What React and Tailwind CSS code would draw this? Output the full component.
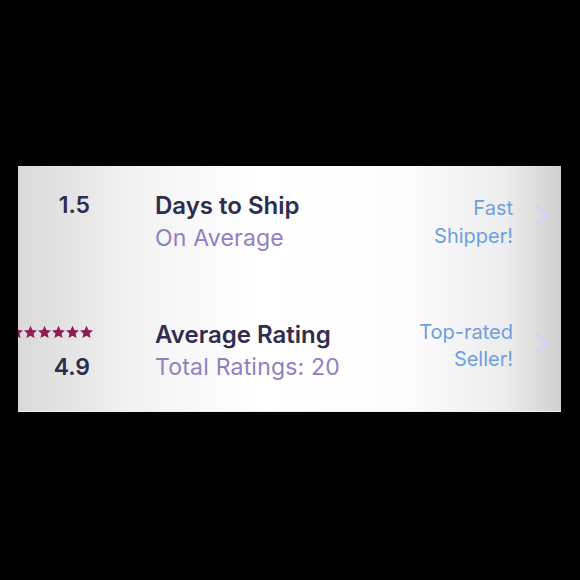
import React from "react";

const font = { fontFamily: '"Inter", "Liberation Sans", sans-serif' };

function Chevron() {
  return (
    <svg width="16" height="24" viewBox="0 0 16 24" fill="none">
      <polyline points="3,3 13,12 3,21" stroke="#d8d4f0" strokeWidth="4" strokeLinejoin="round" strokeLinecap="round" />
    </svg>
  );
}

function Star() {
  return (
    <svg width="13" height="14" viewBox="0.5 0.5 23 22" className="shrink-0">
      <path fill="#8e1f55" d="M12 0.5l3.4 7.4 8.1.8-6.1 5.5 1.8 8.1L12 18.2l-7.2 4.1 1.8-8.1L.5 8.7l8.1-.8z" />
    </svg>
  );
}

export default function App() {
  return (
    <div className="w-[580px] h-[580px] bg-black pt-[166px] pl-[18px]" style={font}>
      <div className="w-[543px] h-[246px] overflow-hidden border-b border-[#efefef] bg-[linear-gradient(90deg,#d9d9d9_0%,#f3f3f3_22%,#ffffff_45%,#fcfcfc_72%,#ececec_90%,#d0d0d0_100%)] pt-[23px]">
        <div className="flex h-[131px]">
          <div className="w-[72px] text-right text-[23px] leading-[33px] font-semibold text-[#2f2d4e]">1.5</div>
          <div className="ml-[65px] flex-1">
            <div className="text-[24px] leading-[33px] font-semibold text-[#2f2d4e]">Days to Ship</div>
            <div className="text-[23px] leading-[33px] tracking-[0.2px] text-[#8c82c2]">On Average</div>
          </div>
          <div className="mt-[5px] text-right text-[20px] leading-[28px] text-[#6ea0e0]">
            <div>Fast</div>
            <div>Shipper!</div>
          </div>
          <div className="ml-[21px] mr-[11px] mt-[14px]">
            <Chevron />
          </div>
        </div>
        <div className="flex">
          <div className="w-[72px] flex flex-col items-end">
            <div className="mt-[5px] mr-[-3px] flex gap-[1px]">
              <Star />
              <Star />
              <Star />
              <Star />
              <Star />
              <Star />
            </div>
            <div className="mt-[12px] text-[23px] leading-[33px] font-semibold text-[#2f2d4e]">4.9</div>
          </div>
          <div className="ml-[65px] flex-1">
            <div className="text-[24px] leading-[30px] font-semibold text-[#2f2d4e]">Average Rating</div>
            <div className="mt-[2px] text-[23px] leading-[31px] tracking-[0.2px] text-[#8c82c2]">Total Ratings: 20</div>
          </div>
          <div className="mt-[-1px] text-right text-[20px] leading-[27px] text-[#6ea0e0]">
            <div>Top-rated</div>
            <div>Seller!</div>
          </div>
          <div className="ml-[21px] mr-[11px] mt-[11px]">
            <Chevron />
          </div>
        </div>
      </div>
    </div>
  );
}
